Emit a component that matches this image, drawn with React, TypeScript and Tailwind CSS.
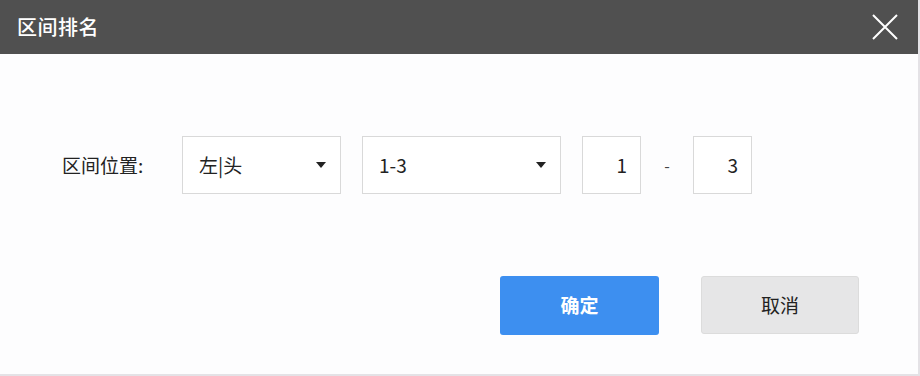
const font = { fontFamily: '"Microsoft YaHei", "Noto Sans CJK SC", "Liberation Sans", sans-serif' };

function Caret() {
  return (
    <svg width="10" height="6" viewBox="0 0 10 6" className="fill-[#222]">
      <path d="M0 0 H10 L5 6 Z" />
    </svg>
  );
}

function Select({ value, width }: { value: string; width: string }) {
  return (
    <div
      className={`${width} h-[58px] border border-[#d9d9d9] bg-white flex items-center justify-between pl-4 pr-[14px] text-[19px] text-[#222]`}
    >
      <span>{value}</span>
      <Caret />
    </div>
  );
}

function NumBox({ value }: { value: string }) {
  return (
    <div className="w-[59px] h-[58px] border border-[#d9d9d9] bg-white flex items-center justify-end pr-[13px] text-[19px] text-[#222]">
      {value}
    </div>
  );
}

export default function App() {
  return (
    <div className="w-[920px] h-[376px] bg-white" style={font}>
      <div className="w-[920px] h-[376px] flex flex-col border-r-2 border-b-2 border-[#e4e2e6] bg-[#fdfdfe]">
        {/* Header */}
        <div className="h-[54px] bg-[#505050] flex items-center justify-between pl-[17px] pr-[20px]">
          <span className="text-white text-[20px] font-medium tracking-[0.5px]">区间排名</span>
          <svg width="26" height="26" viewBox="0 0 26 26" className="stroke-white" strokeWidth="2">
            <path d="M1 1 L25 25 M25 1 L1 25" />
          </svg>
        </div>

        {/* Row */}
        <div className="flex items-center pl-[62px] pt-[82px] text-[19px] text-[#222]">
          <span className="w-[120px]">区间位置:</span>
          <Select value="左|头" width="w-[159px]" />
          <div className="w-[21px]" />
          <Select value="1-3" width="w-[199px]" />
          <div className="w-[21px]" />
          <NumBox value="1" />
          <span className="w-[52px] text-center text-[16px] text-[#444]">-</span>
          <NumBox value="3" />
        </div>

        {/* Buttons */}
        <div className="flex pl-[500px] pt-[82px] gap-[42px]">
          <button className="w-[159px] h-[59px] rounded-[3px] bg-[#3d8ff0] text-white text-[19px] font-bold">
            确定
          </button>
          <button className="w-[158px] h-[58px] rounded-[3px] bg-[#e6e6e7] border border-[#dcdcdc] text-[#222] text-[19px]">
            取消
          </button>
        </div>
      </div>
    </div>
  );
}
